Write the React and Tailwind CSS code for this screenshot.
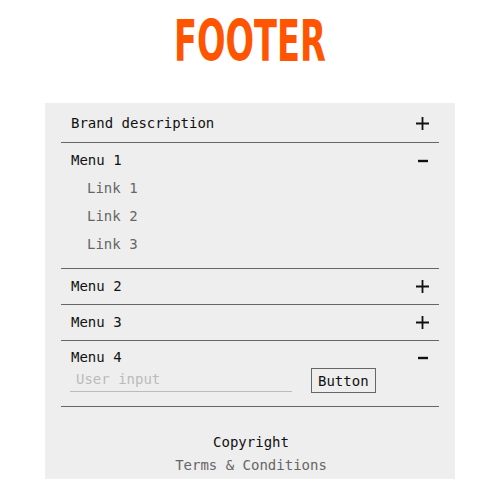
import React, { useState } from 'react';

const mono = { fontFamily: '"DejaVu Sans Mono", "Liberation Mono", monospace' };

const Plus = () => (
  <svg width="13" height="13" viewBox="0 0 13 13" className="block">
    <path d="M6.5 0V13M0 6.5H13" stroke="#111" strokeWidth="1.8" fill="none" />
  </svg>
);

const Minus = () => (
  <svg width="11" height="13" viewBox="0 0 11 13" className="block">
    <path d="M0 7H10" stroke="#111" strokeWidth="2.4" fill="none" />
  </svg>
);

const Section = ({ title, open, onToggle, top = 'pt-[7px] pb-[8px]', children }) => (
  <div className="border-b border-[#666]">
    <button
      type="button"
      onClick={onToggle}
      className={`flex w-full items-center justify-between px-[10px] text-left text-sm leading-5 text-[#111] ${open ? top.split(' ')[0] : top}`}
    >
      <span>{title}</span>
      {open ? <Minus /> : <Plus />}
    </button>
    {open && children}
  </div>
);

const App = () => {
  const [open, setOpen] = useState({ brand: false, m1: true, m2: false, m3: false, m4: true });
  const toggle = (k) => () => setOpen({ ...open, [k]: !open[k] });

  return (
    <div className="min-h-[500px] bg-white" style={mono}>
      <div className="flex h-[103px] justify-center pt-[13px]">
        <h1
          className="scale-x-[0.655] text-[57px] leading-none font-bold text-[#ff5500]"
          style={{ fontFamily: '"DejaVu Sans Condensed", "Liberation Sans", sans-serif' }}
        >
          FOOTER
        </h1>
      </div>

      <footer className="mx-auto w-[410px] bg-[#eeeeee] px-4 pb-[3px]">
        <Section title="Brand description" open={open.brand} onToggle={toggle('brand')} top="pt-[10px] pb-[9px]" />

        <Section title="Menu 1" open={open.m1} onToggle={toggle('m1')}>
          <ul className="pt-[4px] pb-[10px] pl-[26px] text-sm leading-[28px] text-[#666]">
            <li><a href="#">Link 1</a></li>
            <li><a href="#">Link 2</a></li>
            <li><a href="#">Link 3</a></li>
          </ul>
        </Section>

        <Section title="Menu 2" open={open.m2} onToggle={toggle('m2')} />
        <Section title="Menu 3" open={open.m3} onToggle={toggle('m3')} />

        <Section title="Menu 4" open={open.m4} onToggle={toggle('m4')} top="pt-[6px] pb-[8px]">
          <div className="flex items-start pl-[9px] pb-[13px]">
            <input
              type="text"
              placeholder="User input"
              className="h-[25px] w-[222px] border-b border-[#bbb] bg-transparent px-[6px] text-sm text-[#111] outline-none placeholder:text-[#bbb]"
              style={mono}
            />
            <button
              type="button"
              className="mt-px ml-[19px] h-[25px] border border-[#666] px-[6px] text-sm text-[#111]"
            >
              Button
            </button>
          </div>
        </Section>

        <div className="pt-[25px] pb-[1px] pl-[2px] text-center text-sm leading-5">
          <p className="text-[#111]">Copyright</p>
          <p className="mt-[3px] text-[#666]">Terms &amp; Conditions</p>
        </div>
      </footer>
    </div>
  );
};

export default App;
